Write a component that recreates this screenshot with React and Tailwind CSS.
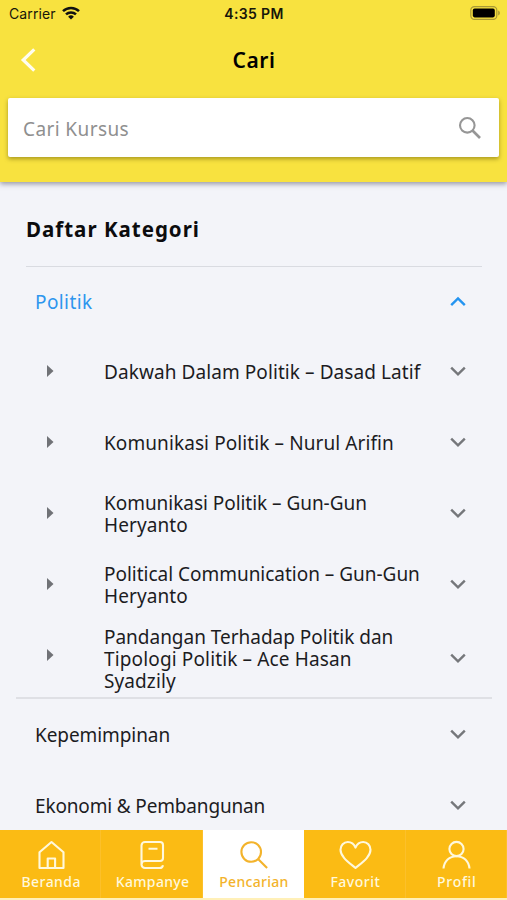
const Chevron = ({ up = false, className = 'text-[#75777b]' }) => (
  <svg className={`mb-px size-6 shrink-0 ${className}`} viewBox="0 0 24 24" fill="none" stroke="currentColor" strokeWidth="2.4">
    <path d={up ? 'M5.2 16.2 12 9.400l6.8 6.8' : 'M5.2 8.6 12 15.4l6.8-6.8'} />
  </svg>
)

const lessons = [
  { lines: [['Dakwah Dalam Politik – Dasad Latif', 'tracking-[0.08px]']] },
  { lines: [['Komunikasi Politik – Nurul Arifin', 'tracking-[0.09px]']] },
  { lines: [['Komunikasi Politik – Gun-Gun', 'tracking-[-0.04px]'], ['Heryanto', 'tracking-[0.1px]']] },
  { lines: [['Political Communication – Gun-Gun', 'tracking-[-0.02px]'], ['Heryanto', 'tracking-[0.1px]']] },
  {
    tall: true,
    lines: [
      ['Pandangan Terhadap Politik dan', 'tracking-[-0.02px]'],
      ['Tipologi Politik – Ace Hasan', 'tracking-[0.14px]'],
      ['Syadzily', 'tracking-[0.1px]'],
    ],
  },
]

const tabs = [
  {
    label: 'Beranda',
    tracking: 'tracking-[0.45px]',
    icon: (
      <path d="M3.500 28V12.200L15.500 2 27.500 12.200V28Zm8.200 0v-9.500h7.400V28" />
    ),
  },
  {
    label: 'Kampanye',
    tracking: 'tracking-[0.35px]',
    icon: (
      <path d="M4.500 24.500V5.500a3.500 3.500 0 0 1 3.500-3.500H23a3 3 0 0 1 3 3V18a3 3 0 0 1-3 3H8a3.500 3.500 0 0 0 0 7H22.500a3.500 3.500 0 0 0 3.500-2.800M11.500 8.700H20.500" />
    ),
  },
  {
    label: 'Pencarian',
    tracking: 'tracking-[0.3px]',
    active: true,
    icon: (
      <>
        <circle cx="13.200" cy="12" r="9.800" />
        <path d="m20.300 19.200 8.800 8.800" />
      </>
    ),
  },
  {
    label: 'Favorit',
    tracking: 'tracking-[0.5px]',
    icon: (
      <path d="M15.500 28C9 22.500.500 17 .500 9.800.500 5.300 3.700 2 7.800 2c3.400 0 6.200 2 7.700 5.600C17 4 19.800 2 23.200 2c4.100 0 7.300 3.300 7.300 7.800C30.500 17 22 22.500 15.500 28Z" />
    ),
  },
  {
    label: 'Profil',
    tracking: 'tracking-[0.7px]',
    icon: (
      <>
        <circle cx="15.500" cy="9" r="7.100" />
        <path d="M2.500 28.500c.8-7.500 5.800-12.300 13-12.300s12.200 4.800 13 12.300" />
      </>
    ),
  },
]

function StatusBar() {
  return (
    <div className="grid h-7 grid-cols-3 items-center pl-[9px] pr-[6px] font-['Inter','Liberation_Sans',sans-serif] text-[14px] leading-none text-[#17160a]">
      <div className="flex items-center gap-[6px]">
        <span className="tracking-[0.1px]">Carrier</span>
        <svg className="mb-[2px] h-[14px] w-[18px]" viewBox="0 0 18 14" fill="none" stroke="#111" strokeWidth="2.500">
          <path d="M1 5.200a11.500 11.500 0 0 1 16 0M4 8.400a7.200 7.200 0 0 1 10 0" />
          <path d="M9 13.500 6.100 10.700a4.200 4.200 0 0 1 5.800 0Z" fill="#111" stroke="none" />
        </svg>
      </div>
      <span className="-ml-[2px] text-center font-semibold tracking-[0.35px] whitespace-nowrap">4:35 PM</span>
      <svg className="mb-[2px] h-[14px] w-[31px] justify-self-end" viewBox="0 0 31 14">
        <rect x=".8" y=".6" width="26" height="12.800" rx="3.600" fill="none" stroke="#a89a35" strokeWidth="1.200" />
        <rect x="2.800" y="2.600" width="22" height="8.800" rx="1.800" fill="#000" />
        <path d="M28.200 4.500c2.200.8 2.200 4.200 0 5Z" fill="#a89a35" />
      </svg>
    </div>
  )
}

export default function App() {
  return (
    <div className="flex h-[900px] w-[507px] flex-col overflow-hidden bg-[#f3f4f9] font-['Noto_Sans','Open_Sans',sans-serif] text-[#1c1c1f]">
      <header className="z-10 flex h-[182px] shrink-0 flex-col bg-[#f8e23f] shadow-[0_2px_5px_rgba(60,60,80,0.5)]">
        <StatusBar />
        <div className="grid h-[70px] grid-cols-[1fr_auto_1fr] items-center pb-[6px]">
          <svg className="ml-5 h-6 w-4" viewBox="0 0 16 24" fill="none" stroke="#fffdf0" strokeWidth="3.200">
            <path d="M14.300 1.300 3.200 12l11.100 10.700" />
          </svg>
          <h1 className="pl-px text-[21px] leading-none font-semibold tracking-[0.6px] text-black">Cari</h1>
        </div>
        <div className="mx-2 flex h-[59px] items-center justify-between rounded-[2px] bg-white pr-[17px] pl-[15px] shadow-[0_2px_4px_rgba(90,80,0,0.5)]">
          <span className="pt-[3px] text-[19px] tracking-[0.4px] text-[#8f8f8f]">Cari Kursus</span>
          <svg className="size-6" viewBox="0 0 24 24" fill="none" stroke="#969696">
            <circle cx="9.300" cy="9.300" r="7.300" strokeWidth="2.100" />
            <path d="m14.500 14.500 7.500 7.500" strokeWidth="2.700" />
          </svg>
        </div>
      </header>

      <main className="flex min-h-0 flex-1 flex-col overflow-hidden">
        <div className="mr-[25px] ml-[26px] flex h-[85px] shrink-0 items-center border-b border-[#d9dbe1] pt-[10px]">
          <h2 className="text-[20.5px] leading-none font-bold tracking-[1px] text-[#0c0c0e]">Daftar Kategori</h2>
        </div>
        <section className="mr-[15px] ml-4 shrink-0 border-b-2 border-[#dfe0e5] text-[19px] leading-[22px]">
          <div className="flex h-[69px] items-center justify-between pr-[22px] pl-[19px] text-[#2e96ee]">
            <span className="tracking-[0.4px]">Politik</span>
            <Chevron up className="text-[#2494f0]" />
          </div>
          {lessons.map((lesson, i) => (
            <div key={i} className={`flex items-center pr-[22px] pl-[31px] ${lesson.tall ? 'h-[77px]' : 'h-[71px]'}`}>
              <svg className={`h-3 w-[7px] shrink-0 ${lesson.tall ? 'mb-2' : 'mb-[2px]'}`} viewBox="0 0 7 12">
                <path d="M0 0 6.500 6 0 12Z" fill="#707277" />
              </svg>
              <div className="ml-[50px] flex flex-1 flex-col whitespace-nowrap">
                {lesson.lines.map(([text, tracking]) => (
                  <span key={text} className={tracking}>{text}</span>
                ))}
              </div>
              <Chevron />
            </div>
          ))}
        </section>
        <section className="mr-[15px] ml-4 shrink-0 text-[19px] leading-[22px]">
          <div className="flex h-[71px] items-center justify-between pr-[22px] pl-[19px]">
            <span className="tracking-[-0.08px]">Kepemimpinan</span>
            <Chevron />
          </div>
          <div className="flex h-[71px] items-center justify-between pr-[22px] pl-[19px]">
            <span className="tracking-[-0.16px]">Ekonomi &amp; Pembangunan</span>
            <Chevron />
          </div>
        </section>
      </main>

      <nav className="z-10 grid h-[70px] shrink-0 grid-cols-5 border-b-2 border-[#fff0b8] bg-[#fbbb14]">
        {tabs.map((tab) => (
          <div
            key={tab.label}
            className={`flex flex-col items-center border-r pt-[10px] pl-[2px] ${tab.active ? 'border-white bg-white text-[#f3b32b]' : 'border-[#fcc02b] text-[#fff8dc]'}`}
          >
            <svg className="h-[30px] w-[31px] overflow-visible" viewBox="0 0 31 30" fill="none" stroke="currentColor" strokeWidth="2.100" strokeLinejoin="round">
              {tab.icon}
            </svg>
            <span className={`mt-[4px] text-[14px] leading-[16px] font-medium ${tab.tracking}`}>{tab.label}</span>
          </div>
        ))}
      </nav>
    </div>
  )
}
